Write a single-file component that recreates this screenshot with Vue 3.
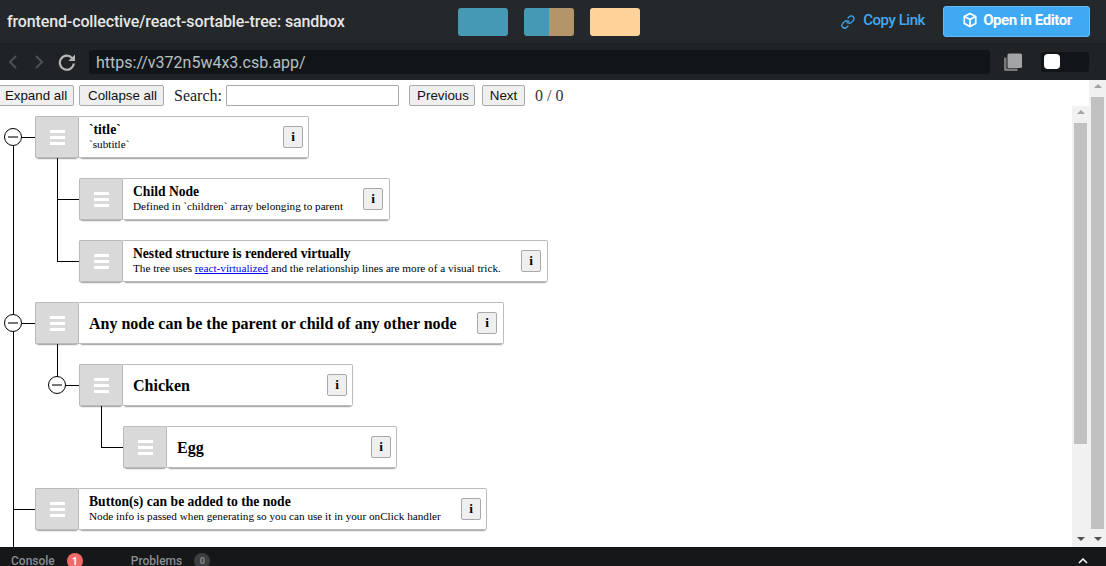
<script setup>
const nodes = [
  { depth: 0, title: '`title`', sub: '`subtitle`', width: 230, gap: 5 },
  { depth: 1, title: 'Child Node', sub: 'Defined in `children` array belonging to parent', width: 267, gap: 6 },
  { depth: 1, title: 'Nested structure is rendered virtually', link: true, width: 425, gap: 6 },
  { depth: 0, title: 'Any node can be the parent or child of any other node', width: 425, gap: 6 },
  { depth: 1, title: 'Chicken', width: 230, gap: 5 },
  { depth: 2, title: 'Egg', width: 230, gap: 5 },
  { depth: 0, title: 'Button(s) can be added to the node', sub: 'Node info is passed when generating so you can use it in your onClick handler', width: 408, gap: 5 }
]
const lines = [
  'M13.5 31V441', 'M13 31.5H35', 'M13 217.5H35', 'M13 403.5H35',
  'M57.5 52V155.5', 'M57 93.5H79', 'M57 155.5H79',
  'M57.5 238V279.5', 'M57 279.5H79',
  'M101.5 300V341.5', 'M101 341.5H123'
]
const toggles = [
  { x: 13, y: 31 }, { x: 13, y: 217 }, { x: 57, y: 279 }
]
</script>

<template>
  <div class="app">
    <header class="topbar">
      <div class="title">frontend-collective/react-sortable-tree: sandbox</div>
      <div class="swatches">
        <span class="swatch teal"></span>
        <span class="swatch split"></span>
        <span class="swatch peach"></span>
      </div>
      <div class="actions">
        <a class="copy">
          <svg width="16" height="16" viewBox="0 0 16 16" fill="none" stroke="#40a9f3" stroke-width="1.3">
            <path d="M6.6 9.4l2.8-2.8" />
            <path d="M7.6 4.4l1.7-1.7a2.6 2.6 0 0 1 3.9 3.9l-1.7 1.8a2.6 2.6 0 0 1-3.4.3" />
            <path d="M8.4 11.6l-1.7 1.7a2.6 2.6 0 0 1-3.9-3.9l1.7-1.8a2.6 2.6 0 0 1 3.4-.3" />
          </svg>
          <span class="copy-text">Copy Link</span>
        </a>
        <button class="open">
          <svg width="16" height="16" viewBox="0 0 16 16" fill="none" stroke="#fff" stroke-width="1.7" stroke-linejoin="round">
            <path d="M8 1.6l5.7 2.8v7L8 14.6l-5.7-3.2v-7z" />
            <path d="M2.6 4.6L8 7.4l5.4-2.8M8 7.4v7" />
          </svg>
          <span>Open in Editor</span>
        </button>
      </div>
    </header>

    <nav class="navbar">
      <svg class="nav-arrow back" width="10" height="16" viewBox="0 0 10 16" fill="none" stroke="#4d5255" stroke-width="2"><path d="M8 2L2 8l6 6" /></svg>
      <svg class="nav-arrow forward" width="10" height="16" viewBox="0 0 10 16" fill="none" stroke="#4d5255" stroke-width="2"><path d="M2 2l6 6-6 6" /></svg>
      <svg class="reload" width="18" height="18" viewBox="0 0 18 18" fill="none">
        <path d="M14.2 5.2A7 7 0 1 0 15.8 10.5" stroke="#b4b6b7" stroke-width="2.2" />
        <path d="M17 1.4V8H10.4z" fill="#b4b6b7" />
      </svg>
      <div class="url">https://v372n5w4x3.csb.app/</div>
      <svg class="copies" width="20" height="19" viewBox="0 0 20 19">
        <path d="M1 4.5h2.5V15.5h11V18H2.5A1.5 1.5 0 0 1 1 16.5z" fill="#77797a" />
        <rect x="4.5" y="0.5" width="14.5" height="14.5" rx="1.5" fill="#a3a4a5" />
      </svg>
      <div class="toggle"><span class="knob"></span></div>
    </nav>

    <main class="viewport">
      <div class="page">
        <div class="toolbar">
          <button class="btn expand">Expand all</button>
          <button class="btn collapse">Collapse all</button>
          <label class="search">Search:<input class="search-input" /></label>
          <button class="btn previous">Previous</button>
          <button class="btn next">Next</button>
          <span class="count">0 / 0</span>
        </div>
        <div class="tree-wrap">
          <div class="tree">
            <svg class="lines" width="300" height="441" fill="none" stroke="#000">
              <path v-for="d in lines" :key="d" :d="d" />
            </svg>
            <span
              v-for="t in toggles"
              :key="t.y"
              class="tree-toggle"
              :style="{ left: t.x - 9 + 'px', top: t.y - 9 + 'px' }"
            ></span>
            <div
              v-for="n in nodes"
              :key="n.title"
              class="row"
              :style="{ paddingLeft: 35 + n.depth * 44 + 'px' }"
            >
              <div class="handle">
                <span class="bars"></span>
              </div>
              <div class="content" :style="{ width: n.width + 'px', paddingRight: n.gap + 'px' }">
                <div class="label">
                  <div v-if="n.sub || n.link" class="name small">{{ n.title }}</div>
                  <div v-else class="name">{{ n.title }}</div>
                  <div v-if="n.sub" class="sub">{{ n.sub }}</div>
                  <div v-if="n.link" class="sub">The tree uses <a class="link">react-virtualized</a> and the relationship lines are more of a visual trick.</div>
                </div>
                <button class="info">i</button>
              </div>
            </div>
          </div>
          <div class="scrollbar inner">
            <span class="arrow up"></span>
            <span class="thumb inner-thumb"></span>
            <span class="arrow down"></span>
          </div>
        </div>
      </div>
      <div class="scrollbar outer">
        <span class="arrow up"></span>
        <span class="thumb outer-thumb"></span>
        <span class="arrow down"></span>
      </div>
    </main>

    <footer class="bottombar">
      <span class="tab">Console</span>
      <span class="badge red">1</span>
      <span class="tab problems">Problems</span>
      <span class="badge grey">0</span>
      <svg class="chev" width="10" height="6" viewBox="0 0 10 6" fill="none" stroke="#fff" stroke-width="1.5"><path d="M1 5l4-4 4 4" /></svg>
    </footer>
  </div>
</template>

<style>
html, body { margin: 0; overflow: hidden; background: #fff; }
</style>

<style scoped>
.app {
  width: 1106px;
  height: 566px;
  display: flex;
  flex-direction: column;
  overflow: hidden;
  font-family: "Liberation Serif", serif;
}
.topbar {
  height: 44px;
  flex: none;
  background: #24282a;
  display: flex;
  align-items: center;
  font-family: Roboto, sans-serif;
  box-sizing: border-box;
  border-bottom: 1px solid #1f2224;
}
.title {
  width: 458px;
  padding-left: 7px;
  box-sizing: border-box;
  color: #e6e6e6;
  font-size: 16px;
  font-weight: 500;
  letter-spacing: -0.13px;
  white-space: nowrap;
}
.swatches { display: flex; gap: 16px; }
.swatch { width: 50px; height: 28px; border-radius: 3px; display: block; }
.teal { background: #4599b3; }
.split { background: linear-gradient(90deg, #4599b3 50%, #b39569 50%); }
.peach { background: #ffd399; }
.actions {
  margin-left: auto;
  margin-right: 16px;
  display: flex;
  align-items: center;
}
.copy {
  display: flex;
  align-items: center;
  gap: 7px;
  color: #40a9f3;
  font-size: 15px;
  font-weight: 500;
  margin-right: 18px;
}
.copy-text { letter-spacing: -0.45px; margin-bottom: 3px; }
.open {
  width: 147px;
  height: 31px;
  border: 1px solid #66bbf7;
  border-radius: 3px;
  background: #40a9f3;
  color: #fff;
  font: 700 15px Roboto, sans-serif;
  letter-spacing: -0.43px;
  display: flex;
  align-items: center;
  justify-content: center;
  gap: 5px;
  padding: 0 0 3px 1px;
}
.navbar {
  height: 36px;
  flex: none;
  background: #1f2325;
  display: flex;
  align-items: center;
  position: relative;
}
.nav-arrow { flex: none; }
.back { margin-left: 8px; }
.forward { margin-left: 16px; }
.reload { margin-left: 14px; flex: none; }
.url {
  margin-left: 13px;
  width: 901px;
  height: 24px;
  padding: 1px 0 0 7px;
  box-sizing: border-box;
  flex: none;
  border-radius: 3px;
  background: #111517;
  color: #b8c0c4;
  font: 400 16px/24px Roboto, sans-serif;
}
.copies { margin-left: 13px; flex: none; }
.toggle {
  margin-left: 18px;
  width: 48px;
  height: 20px;
  flex: none;
  border-radius: 3px;
  background: #111517;
  padding: 2px 3px;
  box-sizing: border-box;
}
.knob { display: block; width: 16px; height: 15px; border-radius: 4px; background: #fff; }
.viewport {
  flex: 1;
  min-height: 0;
  display: flex;
  background: #fff;
}
.page {
  flex: 1;
  min-width: 0;
  display: flex;
  flex-direction: column;
}
.toolbar {
  height: 26px;
  flex: none;
  display: flex;
  align-items: flex-start;
  padding-top: 5px;
  box-sizing: border-box;
  font-size: 16px;
  color: #000;
}
.btn {
  height: 21px;
  box-sizing: border-box;
  padding: 0;
  border: 1px solid #a9a9a9;
  border-radius: 2px;
  background: #efefef;
  color: #111;
  font: 400 13.33px "Liberation Sans", sans-serif;
}
.expand { width: 76px; margin-left: -2px; }
.collapse { width: 85px; margin-left: 5px; padding-left: 2px; }
.search {
  margin-left: 10px;
  display: flex;
  align-items: center;
  height: 21px;
  color: #222;
}
.search-input {
  width: 173px;
  height: 21px;
  box-sizing: border-box;
  margin: 0 0 0 4px;
  border: 1px solid #a9a9a9;
  border-radius: 1px;
  padding: 0;
  background: #fff;
}
.previous { width: 66px; margin-left: 10px; padding-left: 2px; }
.next { width: 43px; margin-left: 7px; }
.count { margin-left: 10px; line-height: 21px; color: #333; }
.tree-wrap {
  flex: 1;
  min-height: 0;
  display: flex;
}
.tree {
  flex: 1;
  min-width: 0;
  position: relative;
  overflow: hidden;
}
.lines { position: absolute; left: 0; top: 0; }
.tree-toggle {
  position: absolute;
  width: 18px;
  height: 18px;
  box-sizing: border-box;
  border: 1px solid #000;
  border-radius: 50%;
  background: #fff;
  display: flex;
  align-items: center;
  justify-content: center;
}
.tree-toggle::after {
  content: "";
  width: 10px;
  height: 2px;
  background: #777;
}
.row {
  height: 62px;
  padding-top: 10px;
  padding-bottom: 10px;
  box-sizing: border-box;
  display: flex;
  position: relative;
}
.handle {
  width: 44px;
  height: 42px;
  flex: none;
  box-sizing: border-box;
  border: 1px solid #bbb;
  border-radius: 1px;
  background: #d9d9d9;
  box-shadow: 0 2px 2px -2px #000;
  display: flex;
  align-items: center;
  justify-content: center;
}
.bars {
  display: block;
  width: 15px;
  height: 15px;
  background: linear-gradient(#fff 0 3px, transparent 3px 6px, #fff 6px 9px, transparent 9px 12px, #fff 12px 15px);
}
.content {
  height: 42px;
  box-sizing: border-box;
  border: 1px solid #bbb;
  border-left: none;
  border-radius: 0 2px 2px 0;
  background: #fff;
  box-shadow: 0 2px 2px -2px #000;
  padding-left: 10px;
  display: flex;
  align-items: center;
  justify-content: space-between;
  color: #000;
}
.name { font-size: 16px; font-weight: 700; white-space: nowrap; line-height: 18px; padding-top: 1px; }
.name.small { font-size: 13.6px; line-height: 15px; padding-top: 0; margin-top: -1px; margin-bottom: 1px; }
.sub { font-size: 11.2px; line-height: 13px; white-space: nowrap; }
.link { color: #00e; text-decoration: underline; }
.info {
  width: 20px;
  height: 22px;
  flex: none;
  padding: 0;
  box-sizing: border-box;
  border: 1px solid #a9a9a9;
  border-radius: 2px;
  background: #efefef;
  color: #000;
  font: 700 13.33px "Liberation Serif", serif;
}
.scrollbar {
  flex: none;
  width: 17px;
  box-sizing: border-box;
  background: #f1f1f1;
  display: flex;
  flex-direction: column;
  align-items: center;
  position: relative;
}
.thumb { display: block; width: 13px; background: #c1c1c1; flex: none; }
.inner-thumb { height: 321px; margin-top: 9px; }
.outer-thumb { height: 432px; margin-top: 9px; }
.arrow { width: 0; height: 0; flex: none; border-left: 4px solid transparent; border-right: 4px solid transparent; }
.arrow.up { border-bottom: 4px solid #a3a3a3; margin-top: 4px; margin-bottom: 0; }
.arrow.down { border-top: 4px solid #505050; margin-top: auto; margin-bottom: 6px; }
.bottombar {
  height: 19px;
  flex: none;
  background: #151719;
  border-top: 1px solid #0f1112;
  box-sizing: border-box;
  display: flex;
  align-items: center;
  font: 500 12px Roboto, sans-serif;
  overflow: hidden;
  padding-top: 8px;
  position: relative;
}
.tab { color: #8a8d8f; }
.tab:first-child { margin-left: 11px; }
.badge {
  margin-left: 12px;
  width: 16px;
  height: 16px;
  border-radius: 50%;
  display: flex;
  align-items: center;
  justify-content: center;
  font-size: 10px;
  font-weight: 700;
  color: #fff;
}
.red { background: #f16a6a; }
.grey { background: #3c3f41; color: #8a8a8a; font-size: 9px; margin-left: 12px; }
.problems { margin-left: 48px; }
.chev { position: absolute; right: 18px; top: 10px; }
</style>
